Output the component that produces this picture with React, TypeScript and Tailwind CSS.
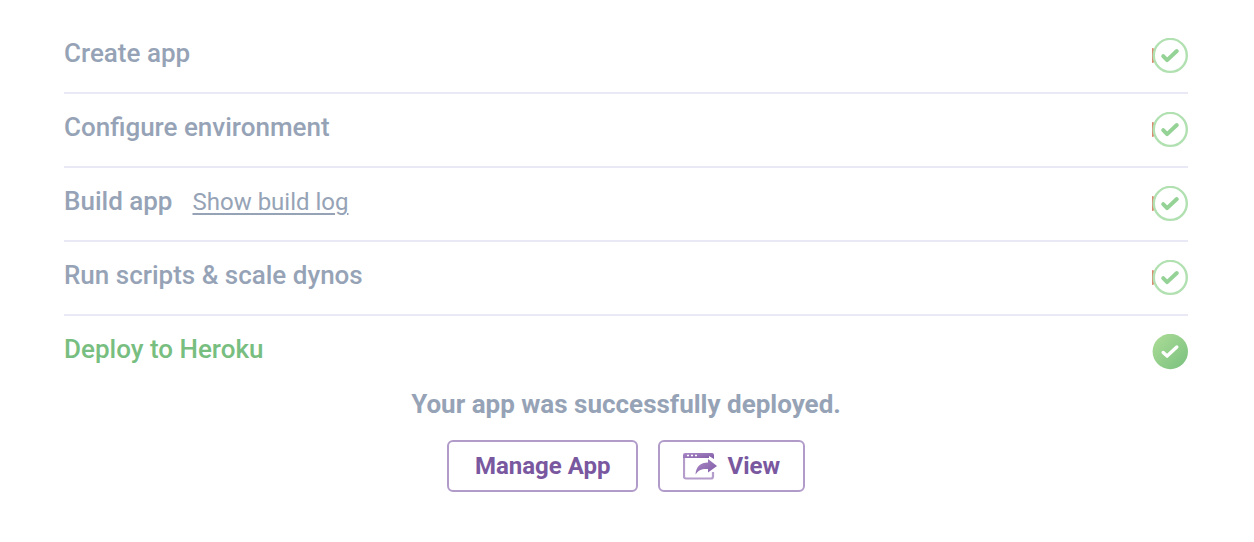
import { useId } from "react";

function PendingCheck() {
  return (
    <svg className="h-9 w-9 shrink-0" viewBox="0 0 36 36" fill="none" role="img" aria-label="Done">
      <path d="M0 10Q1 10 2.500 11Q0.800 17.500 2.500 24Q1 25 0 25Z" fill="#d98a70" />
      <circle cx="18.3" cy="17.4" r="16.500" fill="#fff" stroke="#b1e0b1" strokeWidth="2.4" />
      <path d="M11.2 18.2l3.900 3.900L24.800 13" stroke="#95d296" strokeWidth="4" strokeLinecap="round" strokeLinejoin="round" />
    </svg>
  );
}

function FinalCheck() {
  const id = useId();
  return (
    <svg className="h-9 w-9 shrink-0" viewBox="0 0 36 36" fill="none" role="img" aria-label="Deployed">
      <defs>
        <linearGradient id={id} x1="0" y1="0" x2="1" y2="1">
          <stop offset="0" stopColor="#addd97" />
          <stop offset="1" stopColor="#79c07f" />
        </linearGradient>
      </defs>
      <circle cx="18.3" cy="17.5" r="17.7" fill={`url(#${id})`} />
      <path d="M11.2 18.500l3.900 3.600L24.800 13" stroke="#fff" strokeWidth="3.4" strokeLinecap="round" strokeLinejoin="round" />
    </svg>
  );
}

function ViewIcon() {
  const id = useId();
  return (
    <svg className="h-[27px] w-[34px] shrink-0" viewBox="0 0 34 27" fill="none" aria-hidden="true">
      <defs>
        <linearGradient id={id} x1="0" y1="0" x2="1" y2="1">
          <stop offset="0" stopColor="#a98ac6" />
          <stop offset="1" stopColor="#8058a5" />
        </linearGradient>
      </defs>
      <path d="M30 19v4.500a2 2 0 0 1-2 2h-25A2 2 0 0 1 1 23.500V3" stroke="#b49ccb" strokeWidth="2.2" />
      <path d="M0 5V2Q0 0 2 0H29Q31 0 31 2V6L26 3V5Z" fill={`url(#${id})`} />
      <path d="M4 2.500h2M8 2.500h2M12 2.500h2" stroke="#fff" strokeWidth="1.6" />
      <path d="M25 6L34 13L25 19.500V16C19 15.500 15.500 17 12.500 21.500C13 13.500 17.500 9.500 25 9.500Z" fill={`url(#${id})`} />
    </svg>
  );
}

const steps = [
  { name: "Create app" },
  { name: "Configure environment" },
  { name: "Build app", log: "Show build log" },
  { name: "Run scripts & scale dynos" },
  { name: "Deploy to Heroku", final: true },
];

const buttonStyle =
  "flex h-[52px] items-center rounded-md border-2 border-[#b19bc9] bg-white text-2xl font-bold text-[#79589f]";

export default function App() {
  return (
    <main className="bg-white px-16 pt-5 pb-12 font-['Roboto',sans-serif] text-[#96a3b6]">
      <ul className="mr-0.5">
        {steps.map((step) => (
          <li
            key={step.name}
            className="flex items-start justify-between border-b-2 border-[#e8e9f4] py-[18px] last:border-0 last:pb-0"
          >
            <div className={`flex items-baseline gap-5 text-[26px] leading-[30px] font-medium ${step.final ? "text-[#77be80]" : ""}`}>
              <span>{step.name}</span>
              {step.log && (
                <a href="#build-log" className="text-2xl leading-[30px] font-normal underline decoration-2 underline-offset-3">
                  {step.log}
                </a>
              )}
            </div>
            {step.final ? <FinalCheck /> : <PendingCheck />}
          </li>
        ))}
      </ul>
      <p className="mt-4 mr-0.5 text-center text-[26px] leading-9 font-bold">Your app was successfully deployed.</p>
      <div className="mt-[18px] mr-0.5 flex justify-center gap-5">
        <button type="button" className={`${buttonStyle} px-[26px]`}>
          Manage App
        </button>
        <button type="button" className={`${buttonStyle} gap-2.5 px-[23px]`}>
          <ViewIcon />
          View
        </button>
      </div>
    </main>
  );
}
